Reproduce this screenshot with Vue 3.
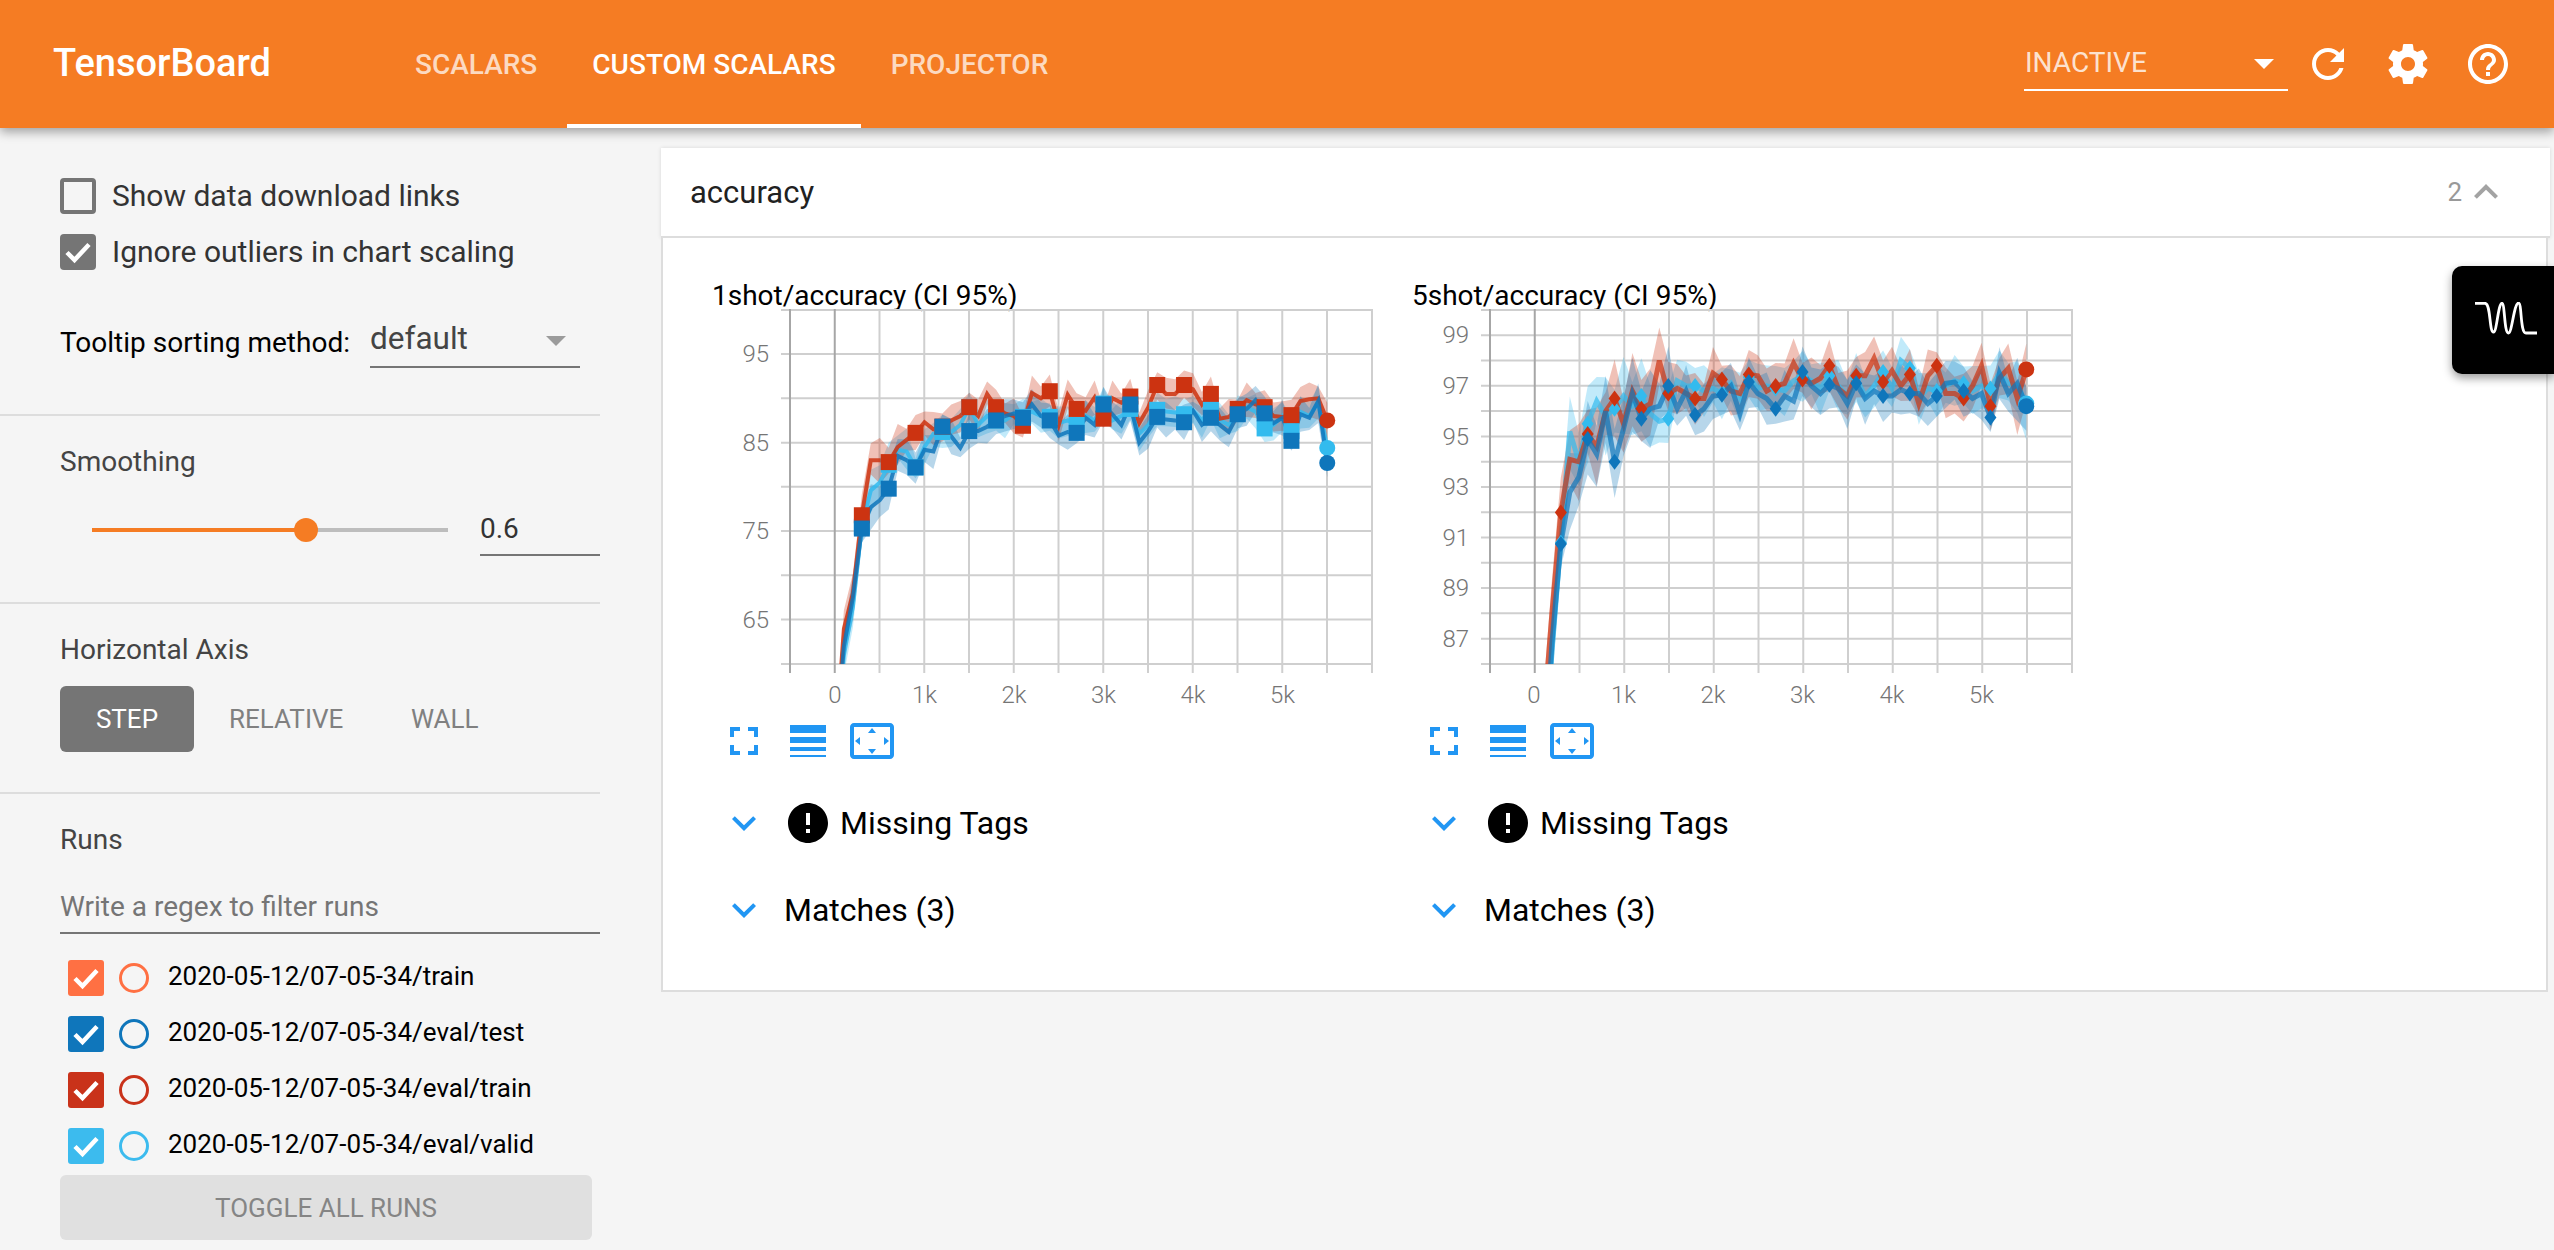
<script setup>
import { ref, computed } from 'vue'

const smoothing = ref(0.6)
const sliderWidth = computed(() => smoothing.value * 100 + '%')

const runs = [
  { name: '2020-05-12/07-05-34/train', color: '#ff7043' },
  { name: '2020-05-12/07-05-34/eval/test', color: '#0f76bb' },
  { name: '2020-05-12/07-05-34/eval/train', color: '#c9321a' },
  { name: '2020-05-12/07-05-34/eval/valid', color: '#3cbbee' }
]

const RED = '#cc3311'
const BLUE = '#0f76bb'
const CYAN = '#33bbee'

// values every 100 steps, 100..5500, read off the original charts
const data1 = {
  red: [64, 68, 76.8, 83, 83, 82.8, 84.5, 85.3, 86.1, 87.3, 86.5, 86.8, 87.5, 88, 89, 88, 90.5, 89, 88.3, 88, 86.9, 90.6, 90, 90.8, 87, 90.4, 88.8, 88.6, 90.1, 87.7, 90, 89.5, 90.2, 87.2, 89, 91.5, 90.5, 90.5, 91.5, 91, 89.3, 90.5, 87.7, 87.9, 88.8, 89.8, 89.3, 89, 88, 87.9, 88.1, 89.7, 89.9, 90, 87.5],
  blue: [62, 67.5, 75.3, 77.7, 78.5, 79.8, 83.5, 83, 82.2, 84.2, 84, 86.8, 85.7, 84.4, 86.3, 86.3, 86.8, 87.5, 88, 88.3, 87.8, 89.3, 88, 87.5, 85.8, 86.2, 86.1, 87.8, 87, 89.3, 88.2, 87, 89.3, 85, 86.3, 87.9, 87.6, 87.5, 87.3, 88.6, 87, 87.8, 87, 86.2, 88.2, 88.8, 89.8, 88.3, 87.2, 87.8, 85.2, 88.2, 87.8, 89.7, 82.7],
  cyan: [61, 66.5, 75.5, 79.6, 80.5, 82.5, 84.2, 84, 82.2, 84.5, 86, 86.2, 86.2, 87, 89, 87, 88, 87.5, 87.5, 88.2, 87.9, 88.5, 88, 87.9, 87.2, 87.5, 87, 88, 87.5, 89.4, 87.5, 88, 88.8, 86, 87, 88.7, 88.5, 88.4, 88.2, 88.6, 87.5, 88.8, 87.5, 87, 88.3, 89, 88.5, 86.6, 87, 88, 86.3, 88.5, 88, 89.5, 84.4]
}
const data2 = {
  red: [83.5, 88, 92, 94.1, 94, 95.1, 94.6, 96, 96.5, 95.5, 96.8, 96.1, 96.3, 98, 96.7, 96.9, 96.7, 96.5, 96.5, 97.5, 97.25, 96.8, 96.7, 97.45, 97.4, 96.8, 97, 97.1, 97.9, 97.25, 97.1, 97.3, 97.8, 96.9, 96.6, 97.4, 97.4, 98.1, 97.15, 97.6, 97, 97.45, 96.3, 97.4, 97.8, 96.7, 96.7, 96.5, 97, 97.8, 96.2, 97.3, 97.7, 96.5, 97.65],
  blue: [81, 86.8, 90.75, 92.8, 93.4, 94.9, 94.3, 96, 94, 95.3, 96.7, 95.7, 96.1, 96.2, 97, 96.1, 96.8, 95.85, 96.1, 96.6, 96.65, 97, 95.9, 97.15, 96.7, 96.5, 96.1, 96.6, 96.4, 97.55, 97, 96.7, 97.05, 96.9, 96.3, 97.1, 96.5, 96.8, 96.6, 96.6, 96.85, 96.7, 96.7, 96.3, 96.6, 97.1, 97.15, 96.8, 96.5, 96.7, 95.75, 97.5, 96.7, 97.1, 96.2],
  cyan: [80.5, 86.5, 90.8, 95.2, 94, 95.5, 96.4, 95.8, 96.1, 96.6, 96.2, 96.6, 95.9, 95.6, 95.7, 97.2, 97, 97, 96.8, 96.9, 96.7, 97.1, 96.5, 97.35, 96.9, 97, 96.9, 96.8, 97.2, 97.4, 97.2, 96.9, 97.4, 97, 96.6, 97.3, 96.6, 97, 97.55, 96.9, 98, 97.7, 96.5, 96.9, 96.8, 97, 97.2, 97.1, 96.8, 97, 96.9, 97.5, 97.1, 97, 96.3]
}

function buildChart(cfg) {
  const xOf = (step) => cfg.zero + step * 0.0895
  const yOf = cfg.yOf
  const grid = []
  for (let i = 0; i <= 12; i++) grid.push(cfg.first + i * 44.75)
  const series = [
    { color: CYAN, vals: cfg.data.cyan, seed: 0.4 },
    { color: RED, vals: cfg.data.red, seed: 2.1 },
    { color: BLUE, vals: cfg.data.blue, seed: 4.3 }
  ].map((s) => {
    const pts = [cfg.start].concat(s.vals)
    const spread = pts.map((v, i) => {
      const early = i <= cfg.earlyUntil ? cfg.earlyBoost : 1
      return cfg.band * early * (0.55 + 0.6 * Math.abs(Math.sin(i * 1.7 + s.seed)))
    })
    const top = pts.map((v, i) => `${xOf(i * 100).toFixed(1)},${yOf(v + spread[i]).toFixed(1)}`)
    const low = pts.map((v, i) => `${xOf(i * 100).toFixed(1)},${yOf(v - spread[(i + 2) % spread.length]).toFixed(1)}`).reverse()
    const markers = []
    for (let i = 3; i <= 51; i += 3) markers.push({ x: xOf(i * 100), y: yOf(pts[i]) })
    return {
      color: s.color,
      line: 'M' + pts.map((v, i) => `${xOf(i * 100).toFixed(1)},${yOf(v).toFixed(1)}`).join('L'),
      area: 'M' + top.concat(low).join('L') + 'Z',
      markers,
      end: { x: xOf(5500), y: yOf(pts[55]) }
    }
  })
  return { ...cfg, grid, series, xOf, yOf }
}

const charts = [
  buildChart({
    id: 'c1',
    title: '1shot/accuracy (CI 95%)',
    data: data1,
    zero: 122,
    first: 77,
    start: 50,
    band: 1.75,
    earlyUntil: 8,
    earlyBoost: 1.3,
    lineWidth: 4,
    lineOpacity: 0.85,
    marker: 'square',
    yOf: (v) => 48 + (95 - v) * 8.86,
    hlines: [4, 48, 92.3, 136.7, 180.7, 225, 269.3, 313.6, 358],
    labels: [95, 85, 75, 65]
  }),
  buildChart({
    id: 'c2',
    title: '5shot/accuracy (CI 95%)',
    data: data2,
    zero: 121,
    first: 77,
    start: 70,
    band: 0.9,
    earlyUntil: 15,
    earlyBoost: 1.5,
    lineWidth: 5,
    lineOpacity: 0.7,
    marker: 'diamond',
    yOf: (v) => 29.3 + (99 - v) * 25.3,
    hlines: Array.from({ length: 15 }, (_, i) => 4 + i * 25.28),
    labels: [99, 97, 95, 93, 91, 89, 87]
  })
]
const xTicks = [
  { step: 0, text: '0' },
  { step: 1000, text: '1k' },
  { step: 2000, text: '2k' },
  { step: 3000, text: '3k' },
  { step: 4000, text: '4k' },
  { step: 5000, text: '5k' }
]
</script>

<template>
  <div class="page">
    <header class="topbar">
      <div class="brand">TensorBoard</div>
      <nav class="tabs">
        <a class="tab">SCALARS</a>
        <a class="tab active">CUSTOM SCALARS</a>
        <a class="tab">PROJECTOR</a>
      </nav>
      <div class="topright">
        <div class="plugin-select">
          <span>INACTIVE</span>
          <i class="caret white"></i>
        </div>
        <svg class="icon" viewBox="0 0 24 24"><path fill="#fff" d="M17.65 6.35C16.2 4.9 14.21 4 12 4c-4.42 0-7.99 3.58-7.99 8s3.57 8 7.99 8c3.73 0 6.84-2.55 7.73-6h-2.08c-.82 2.33-3.04 4-5.65 4-3.31 0-6-2.69-6-6s2.69-6 6-6c1.66 0 3.14.69 4.22 1.78L13 11h7V4l-2.35 2.35z"/></svg>
        <svg class="icon" viewBox="0 0 24 24"><path fill="#fff" d="M19.43 12.98c.04-.32.07-.64.07-.98s-.03-.66-.07-.98l2.11-1.65c.19-.15.24-.42.12-.64l-2-3.46c-.12-.22-.39-.3-.61-.22l-2.49 1c-.52-.4-1.08-.73-1.69-.98l-.38-2.65C14.46 2.18 14.25 2 14 2h-4c-.25 0-.46.18-.49.42l-.38 2.65c-.61.25-1.17.59-1.69.98l-2.49-1c-.23-.09-.49 0-.61.22l-2 3.46c-.13.22-.07.49.12.64l2.11 1.65c-.04.32-.07.65-.07.98s.03.66.07.98l-2.11 1.65c-.19.15-.24.42-.12.64l2 3.46c.12.22.39.3.61.22l2.49-1c.52.4 1.08.73 1.69.98l.38 2.65c.03.24.24.42.49.42h4c.25 0 .46-.18.49-.42l.38-2.65c.61-.25 1.17-.59 1.69-.98l2.49 1c.23.09.49 0 .61-.22l2-3.46c.12-.22.07-.49-.12-.64l-2.11-1.65zM12 15.5c-1.93 0-3.5-1.57-3.5-3.5s1.57-3.5 3.5-3.5 3.5 1.57 3.5 3.5-1.57 3.5-3.5 3.5z"/></svg>
        <svg class="icon" viewBox="0 0 24 24"><path fill="#fff" d="M11 18h2v-2h-2v2zm1-16C6.48 2 2 6.48 2 12s4.48 10 10 10 10-4.48 10-10S17.52 2 12 2zm0 18c-4.41 0-8-3.59-8-8s3.59-8 8-8 8 3.59 8 8-3.59 8-8 8zm0-14c-2.21 0-4 1.79-4 4h2c0-1.1.9-2 2-2s2 .9 2 2c0 2-3 1.75-3 5h2c0-2.25 3-2.5 3-5 0-2.21-1.79-4-4-4z"/></svg>
      </div>
    </header>

    <div class="body">
      <aside class="sidebar">
        <section class="sec sec-options">
          <label class="check-row">
            <span class="box"></span>
            <span>Show data download links</span>
          </label>
          <label class="check-row">
            <span class="box on">
              <svg viewBox="0 0 36 36"><path d="M7 18.5l7.5 7.5L29 10.5" fill="none" stroke="#fff" stroke-width="4.5"/></svg>
            </span>
            <span>Ignore outliers in chart scaling</span>
          </label>
          <div class="sort-row">
            <span class="sort-label">Tooltip sorting method:</span>
            <div class="sort-select">
              <span>default</span>
              <i class="caret"></i>
            </div>
          </div>
        </section>

        <section class="sec sec-smoothing">
          <div class="sec-title">Smoothing</div>
          <div class="smooth-row">
            <div class="slider">
              <div class="slider-fill" :style="{ width: sliderWidth }"></div>
              <div class="slider-thumb" :style="{ left: sliderWidth }"></div>
            </div>
            <input class="smooth-input" :value="smoothing" />
          </div>
        </section>

        <section class="sec sec-axis">
          <div class="sec-title">Horizontal Axis</div>
          <div class="axis-btns">
            <button class="axis-btn selected">STEP</button>
            <button class="axis-btn rel">RELATIVE</button>
            <button class="axis-btn wall">WALL</button>
          </div>
        </section>

        <section class="sec-runs">
          <div class="sec-title">Runs</div>
          <input class="filter" placeholder="Write a regex to filter runs" />
          <div class="run" v-for="run in runs" :key="run.name">
            <span class="run-box" :style="{ background: run.color }">
              <svg viewBox="0 0 36 36"><path d="M7 18.5l7.5 7.5L29 10.5" fill="none" stroke="#fff" stroke-width="4.5"/></svg>
            </span>
            <span class="run-dot" :style="{ borderColor: run.color }"></span>
            <span class="run-name">{{ run.name }}</span>
          </div>
          <button class="toggle">TOGGLE ALL RUNS</button>
        </section>
      </aside>

      <main class="main">
        <div class="cat-head">
          <span class="cat-name">accuracy</span>
          <span class="cat-count">2</span>
          <svg class="icon" viewBox="0 0 24 24"><path fill="#a3a3a3" d="M12 8l-6 6 1.41 1.41L12 10.83l4.59 4.58L18 14z"/></svg>
        </div>
        <div class="cat-body">
          <div class="chart" v-for="c in charts" :key="c.id">
            <div class="chart-title">{{ c.title }}</div>
            <svg class="plot" width="660" height="410" viewBox="0 0 660 410">
              <defs>
                <clipPath :id="c.id"><rect x="68" y="4" width="591" height="354" /></clipPath>
              </defs>
              <line v-for="y in c.hlines" :key="y" x1="68" x2="659" :y1="y" :y2="y" class="grid" />
              <line v-for="(x, i) in c.grid" :key="x" :x1="x" :x2="x" y1="3" y2="367" :class="i < 2 ? 'grid dark' : 'grid'" />
              <line :x1="659" :x2="659" y1="3" y2="367" class="grid" />
              <text v-for="l in c.labels" :key="l" x="56" :y="c.yOf(l) + 8" text-anchor="end" class="tick">{{ l }}</text>
              <text v-for="t in xTicks" :key="t.text" :x="c.xOf(t.step)" y="397" text-anchor="middle" class="tick">{{ t.text }}</text>
              <g :clip-path="`url(#${c.id})`">
                <path v-for="s in c.series" :key="s.color + 'a'" :d="s.area" :fill="s.color" opacity="0.3" />
                <path v-for="s in c.series" :key="s.color + 'l'" :d="s.line" :stroke="s.color" :stroke-width="c.lineWidth" fill="none" :stroke-opacity="c.lineOpacity" />
              </g>
              <g v-for="s in c.series" :key="s.color + 'm'" :fill="s.color">
                <template v-if="c.marker === 'square'">
                  <rect v-for="m in s.markers" :key="m.x" :x="m.x - 8" :y="m.y - 8" width="16" height="16" />
                </template>
                <template v-else>
                  <polygon v-for="m in s.markers" :key="m.x" :points="`${m.x},${m.y - 8} ${m.x + 6},${m.y} ${m.x},${m.y + 8} ${m.x - 6},${m.y}`" />
                </template>
                <circle :cx="s.end.x" :cy="s.end.y" r="8" />
              </g>
            </svg>
            <div class="chart-tools">
              <svg class="icon" viewBox="0 0 24 24"><path fill="#2196f3" d="M7 14H5v5h5v-2H7v-3zm-2-4h2V7h3V5H5v5zm12 7h-3v2h5v-5h-2v3zM14 5v2h3v3h2V5h-5z"/></svg>
              <svg class="icon" viewBox="0 0 24 24"><path fill="#2196f3" d="M3 17h18v-2H3v2zm0 3h18v-1H3v1zm0-7h18v-3H3v3zm0-9v4h18V4H3z"/></svg>
              <svg class="icon" viewBox="0 0 24 24"><path fill="#2196f3" d="M12.01 5.5L10 8h4l-1.99-2.5zM18 10v4l2.5-1.99L18 10zM6 10l-2.5 2.01L6 14v-4zm8 6h-4l2.01 2.5L14 16zm7-13H3c-1.1 0-2 .9-2 2v14c0 1.1.9 2 2 2h18c1.1 0 2-.9 2-2V5c0-1.1-.9-2-2-2zm0 16.01H3V4.99h18v14.02z"/></svg>
            </div>
            <div class="fold">
              <svg class="icon" viewBox="0 0 24 24"><path fill="#2196f3" d="M16.59 8.59L12 13.17 7.41 8.59 6 10l6 6 6-6z"/></svg>
              <svg class="icon alert" viewBox="0 0 24 24"><path fill="#000" d="M12 2C6.48 2 2 6.48 2 12s4.48 10 10 10 10-4.48 10-10S17.52 2 12 2zm1 15h-2v-2h2v2zm0-4h-2V7h2v6z"/></svg>
              <span class="fold-text">Missing Tags</span>
            </div>
            <div class="fold">
              <svg class="icon" viewBox="0 0 24 24"><path fill="#2196f3" d="M16.59 8.59L12 13.17 7.41 8.59 6 10l6 6 6-6z"/></svg>
              <span class="fold-text matches">Matches (3)</span>
            </div>
          </div>
        </div>
      </main>
    </div>

    <div class="side-tab">
      <svg width="66" height="36" viewBox="0 0 66 36">
        <path d="M1 1.300h10C17 1.300 15 30 19.500 30 23 30 24 1.500 28 1.300 31 1.500 30 31 34.500 31 38 31 40 1 44.500 1 48 1 46 31 52 31L63 31" fill="none" stroke="#fff" stroke-width="2.800"/>
      </svg>
    </div>
  </div>
</template>

<style scoped>
.page {
  position: relative;
  height: 1250px;
  overflow: hidden;
  background: #f5f5f5;
  font-family: Roboto, "Liberation Sans", sans-serif;
  color: #212121;
}
.topbar {
  position: relative;
  z-index: 2;
  display: flex;
  align-items: stretch;
  height: 128px;
  background: #f57c23;
  color: #fff;
  box-shadow: 0 4px 10px rgba(0, 0, 0, 0.35);
}
.brand {
  width: 337px;
  padding-left: 53px;
  line-height: 126px;
  font-size: 38px;
  font-weight: 500;
}
.tabs {
  display: flex;
  gap: 5px;
}
.tab {
  display: block;
  padding: 0 25px;
  line-height: 130px;
  font-size: 28px;
  font-weight: 500;
  color: rgba(255, 255, 255, 0.72);
}
.tab.active {
  color: #fff;
  border-bottom: 4px solid #fff;
  height: 124px;
}
.topright {
  margin-left: auto;
  display: flex;
  align-items: center;
  gap: 32px;
  padding-right: 42px;
}
.icon {
  width: 48px;
  height: 48px;
  display: block;
  flex: none;
}
.plugin-select {
  position: relative;
  width: 264px;
  height: 50px;
  margin-right: -16px;
  margin-top: 3px;
  box-sizing: border-box;
  border-bottom: 2px solid #fff;
  font-size: 28px;
  line-height: 44px;
  padding-left: 1px;
  color: rgba(255, 255, 255, 0.8);
}
.caret {
  position: absolute;
  right: 14px;
  top: 18px;
  width: 0;
  height: 0;
  border-left: 10px solid transparent;
  border-right: 10px solid transparent;
  border-top: 10px solid #9b9b9b;
}
.caret.white {
  border-top-color: #fff;
}
.body {
  display: flex;
  height: 1122px;
}
.sidebar {
  width: 600px;
  flex: none;
  overflow: hidden;
}
.sec {
  box-sizing: border-box;
  border-bottom: 2px solid #ddd;
  padding-left: 60px;
}
.sec-options {
  height: 288px;
  padding-top: 50px;
}
.check-row {
  display: flex;
  align-items: center;
  height: 36px;
  margin-bottom: 20px;
  font-size: 30px;
  color: #333;
}
.check-row span:last-child {
  margin-top: -2px;
}
.box {
  box-sizing: border-box;
  width: 36px;
  height: 36px;
  margin-right: 16px;
  border: 4px solid #757575;
  border-radius: 4px;
}
.box.on {
  border: 0;
  background: #757575;
}
.box svg,
.run-box svg {
  display: block;
  width: 36px;
  height: 36px;
}
.sort-row {
  display: flex;
  align-items: center;
  margin-top: 46px;
}
.sort-label {
  width: 310px;
  font-size: 28px;
  color: #000;
}
.sort-select {
  position: relative;
  box-sizing: border-box;
  width: 210px;
  height: 52px;
  border-bottom: 2px solid #757575;
  font-size: 31.500px;
  line-height: 46px;
  color: #444;
}
.sort-select .caret {
  top: 20px;
}
.sec-smoothing {
  height: 188px;
  padding-top: 28px;
}
.sec-title {
  font-size: 28px;
  line-height: 36px;
  color: #444;
}
.smooth-row {
  display: flex;
  align-items: flex-start;
  margin-top: 30px;
  padding-left: 32px;
}
.slider {
  position: relative;
  width: 356px;
  height: 4px;
  margin-top: 18px;
  background: #bdbdbd;
  margin-right: 32px;
}
.slider-fill {
  height: 4px;
  background: #f57c23;
}
.slider-thumb {
  position: absolute;
  top: -10px;
  width: 24px;
  height: 24px;
  margin-left: -12px;
  border-radius: 50%;
  background: #f57c23;
}
.smooth-input {
  box-sizing: border-box;
  width: 120px;
  height: 46px;
  padding: 0 0 7px;
  border: 0;
  border-bottom: 2px solid #757575;
  background: transparent;
  outline: none;
  font: 28px Roboto, sans-serif;
  color: #333;
}
.sec-axis {
  height: 190px;
  padding-top: 28px;
}
.axis-btns {
  display: flex;
  margin-top: 18px;
}
.axis-btn {
  height: 66px;
  border: 0;
  padding: 0;
  background: transparent;
  font: 26px Roboto, sans-serif;
  color: #808080;
  border-radius: 6px;
}
.axis-btn.selected {
  width: 134px;
  background: #757575;
  color: #fff;
}
.axis-btn.rel {
  width: 113px;
  margin-left: 35px;
}
.axis-btn.wall {
  width: 67px;
  margin-left: 69px;
}
.sec-runs {
  padding: 28px 0 0 60px;
}
.filter {
  display: block;
  box-sizing: border-box;
  width: 540px;
  height: 50px;
  margin-top: 26px;
  padding: 0 0 4px;
  border: 0;
  border-bottom: 2px solid #757575;
  background: transparent;
  outline: none;
  font: 28px Roboto, sans-serif;
}
.filter::placeholder {
  color: #757575;
  opacity: 1;
}
.run {
  display: flex;
  align-items: center;
  height: 56px;
  padding-left: 8px;
  font-size: 26px;
  color: #000;
}
.filter + .run {
  margin-top: 16px;
}
.run-box {
  width: 36px;
  height: 36px;
  border-radius: 3px;
}
.run-dot {
  box-sizing: border-box;
  width: 30px;
  height: 30px;
  margin: 0 19px 0 15px;
  border: 3px solid;
  border-radius: 50%;
}
.run-name {
  margin-top: -5px;
}
.toggle {
  display: block;
  width: 532px;
  height: 65px;
  margin-top: 1px;
  border: 0;
  border-radius: 6px;
  background: #e0e0e0;
  font: 26px Roboto, sans-serif;
  color: #858585;
}
.main {
  flex: 1;
  padding: 20px 4px 0 61px;
}
.cat-head {
  display: flex;
  align-items: center;
  box-sizing: border-box;
  height: 90px;
  padding: 0 40px 0 29px;
  background: #fff;
  border-bottom: 2px solid #ddd;
  box-shadow: 0 0 4px rgba(0, 0, 0, 0.12);
}
.cat-name {
  font-size: 31px;
  color: #212121;
}
.cat-count {
  margin-left: auto;
  margin-right: 0;
  font-size: 26px;
  color: #999;
}
.cat-body {
  display: flex;
  box-sizing: border-box;
  height: 754px;
  margin-right: 2px;
  padding: 0 0 0 50px;
  background: #fff;
  border: solid #ddd;
  border-width: 0 2px 2px 2px;
}
.chart {
  width: 700px;
}
.chart-title {
  height: 68px;
  margin-left: -1px;
  padding-top: 40px;
  box-sizing: border-box;
  font-size: 28px;
  line-height: 36px;
  color: #000;
}
.plot {
  display: block;
  overflow: visible;
}
.grid {
  stroke: #cfcfcf;
  stroke-width: 2;
}
.grid.dark {
  stroke: #a6a6a6;
}
.tick {
  font-family: Roboto, sans-serif;
  font-size: 24px;
  font-weight: 300;
  fill: #757575;
}
.chart-tools {
  display: flex;
  gap: 16px;
  margin-left: 7px;
  margin-top: 1px;
}
.fold {
  display: flex;
  align-items: center;
  height: 84px;
  margin-left: 7px;
}
.chart-tools + .fold {
  margin-top: 16px;
}
.fold + .fold {
  margin-top: 3px;
}
.alert {
  margin-left: 16px;
}
.fold-text {
  margin-left: 8px;
  font-size: 32px;
  color: #000;
}
.fold-text.matches {
  margin-left: 16px;
}
.side-tab {
  position: absolute;
  top: 266px;
  right: 0;
  z-index: 3;
  display: flex;
  align-items: center;
  box-sizing: border-box;
  width: 102px;
  height: 108px;
  padding-left: 22px;
  background: #000;
  border-radius: 10px 0 0 10px;
  box-shadow: 0 4px 10px rgba(0, 0, 0, 0.4);
}
</style>

<style>
html,
body {
  margin: 0;
  background: #f5f5f5;
  overflow: hidden;
}
</style>
